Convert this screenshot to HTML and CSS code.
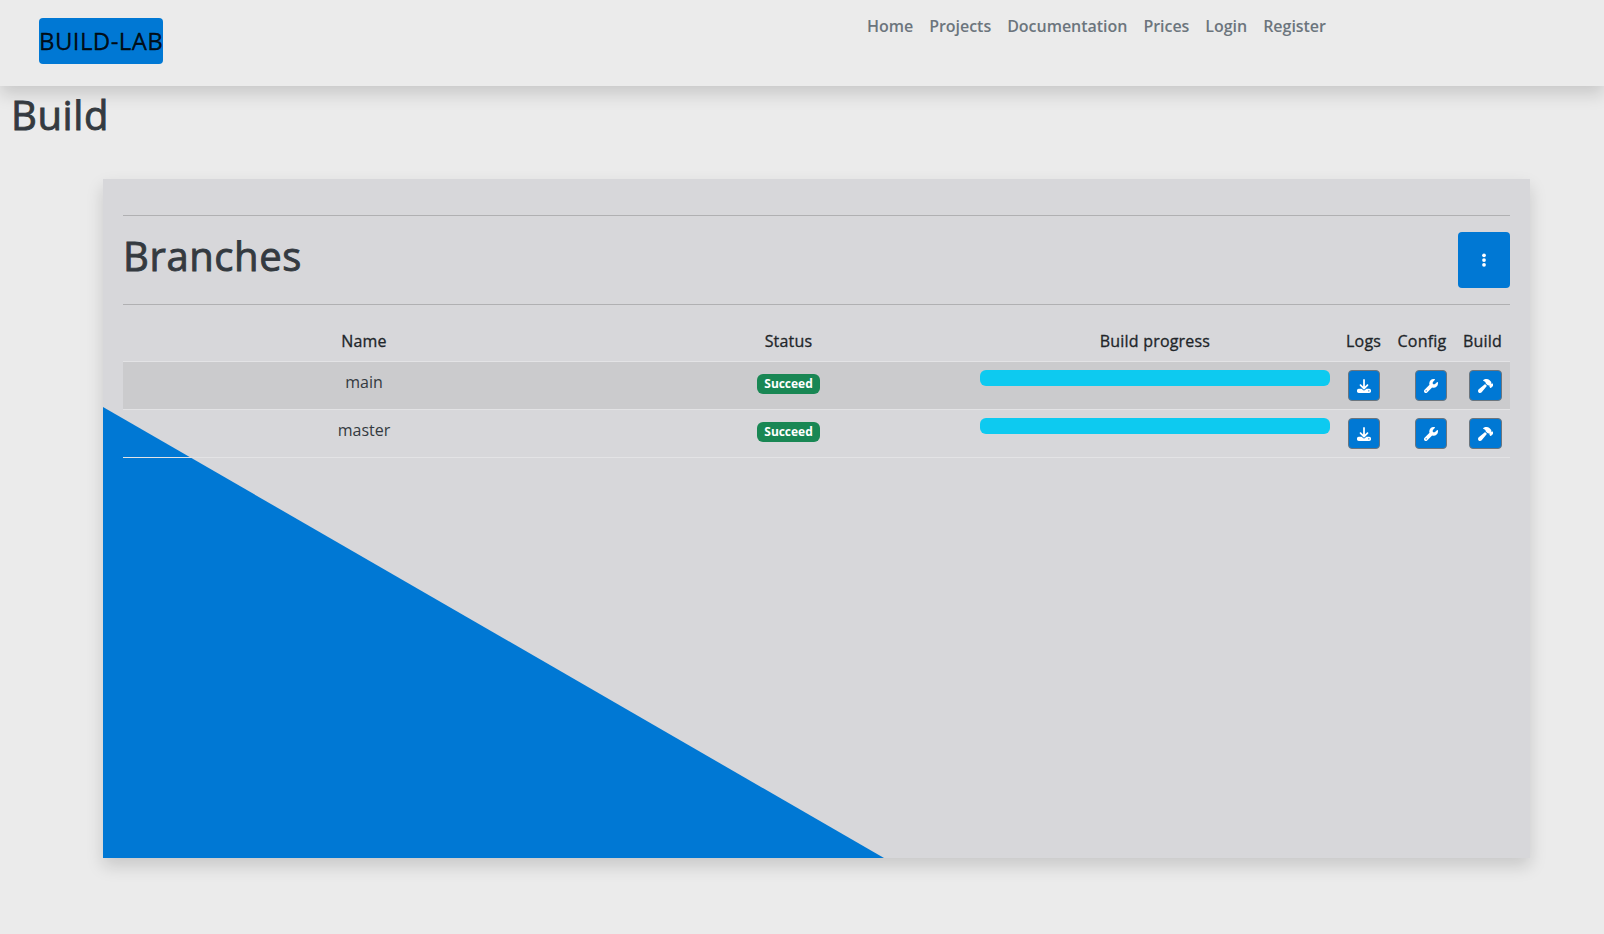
FILE: index.html
```html
<!DOCTYPE html>
<html lang="en">
<head>
  <meta charset="UTF-8">
  <title>Build</title>
  <link rel="stylesheet" href="styles.css">
</head>
<body>

  <header class="topbar">
    <a class="brand" href="#">BUILD-LAB</a>
    <nav class="nav">
      <a href="#">Home</a>
      <a href="#">Projects</a>
      <a href="#">Documentation</a>
      <a href="#">Prices</a>
      <a href="#">Login</a>
      <a href="#">Register</a>
    </nav>
  </header>

  <h1 class="page-title">Build</h1>

  <section class="card">
    <div class="triangle"></div>
    <hr>
    <div class="card-head">
      <h1>Branches</h1>
      <button class="menu-btn">
        <svg class="icon-menu" viewBox="0 0 128 512"><circle cx="64" cy="104" r="60"/><circle cx="64" cy="256" r="60"/><circle cx="64" cy="408" r="60"/></svg>
      </button>
    </div>
    <hr>
    <table class="branches">
      <colgroup>
        <col class="col-name"><col class="col-status"><col class="col-progress"><col class="col-logs"><col class="col-config"><col class="col-build">
      </colgroup>
      <thead>
        <tr>
          <th>Name</th>
          <th>Status</th>
          <th>Build progress</th>
          <th>Logs</th>
          <th>Config</th>
          <th>Build</th>
        </tr>
      </thead>
      <tbody>
        <tr class="odd">
          <td>main</td>
          <td><span class="badge">Succeed</span></td>
          <td><div class="progress"></div></td>
          <td><button class="tool"><svg class="icon" viewBox="0 0 512 512"><path d="M288 32c0-17.700-14.300-32-32-32s-32 14.300-32 32V274.700l-73.400-73.400c-12.500-12.500-32.800-12.500-45.300 0s-12.500 32.800 0 45.300l128 128c12.500 12.500 32.800 12.500 45.300 0l128-128c12.500-12.500 12.500-32.800 0-45.300s-32.800-12.500-45.300 0L288 274.700V32zM64 352c-35.300 0-64 28.700-64 64v32c0 35.300 28.700 64 64 64H448c35.300 0 64-28.700 64-64V416c0-35.300-28.700-64-64-64H346.500l-45.300 45.300c-25 25-65.500 25-90.500 0L165.500 352H64zm368 56a24 24 0 1 1 0 48 24 24 0 1 1 0-48z"/></svg></button></td>
          <td class="end"><button class="tool"><svg class="icon" viewBox="0 0 512 512"><path d="M352 320c88.400 0 160-71.600 160-160c0-15.300-2.200-30.100-6.200-44.200c-3.100-10.800-16.400-13.200-24.300-5.300l-76.800 76.800c-3 3-7.100 4.700-11.300 4.700H336c-8.800 0-16-7.200-16-16V118.600c0-4.200 1.700-8.300 4.700-11.300l76.800-76.800c7.900-7.900 5.400-21.200-5.300-24.300C382.100 2.200 367.300 0 352 0C263.600 0 192 71.600 192 160c0 19.100 3.400 37.500 9.500 54.500L19.900 396.100C7.200 408.800 0 426.100 0 444.100C0 481.600 30.400 512 67.900 512c18 0 35.300-7.200 48-19.900L297.500 310.500c17 6.200 35.400 9.500 54.500 9.500zM80 408a24 24 0 1 1 0 48 24 24 0 1 1 0-48z"/></svg></button></td>
          <td class="end"><button class="tool tool-wide"><svg class="icon" viewBox="0 0 576 512"><path d="M413.500 237.500c-28.200 4.800-58.200-3.600-80-25.400l-38.100-38.100C280.400 159 272 138.800 272 117.600V105.500L192.300 62c-5.300-2.900-8.600-8.600-8.300-14.700s3.900-11.500 9.500-14l47.200-21C259.100 4.200 279 0 299.200 0h18.100c36.700 0 72 14 98.700 39.100l44.600 42c24.200 22.800 33.200 55.700 26.600 86L503 183l8-8c9.400-9.400 24.600-9.400 33.900 0l24 24c9.400 9.400 9.400 24.600 0 33.900l-88 88c-9.400 9.400-24.600 9.400-33.900 0l-24-24c-9.400-9.400-9.400-24.600 0-33.900l8-8-17.500-17.500zM27.400 377.100L260.900 182.600c3.500 4.900 7.500 9.600 11.800 14l38.100 38.100c6 6 12.400 11.200 19.200 15.700L134.900 484.600c-14.500 17.400-36 27.400-58.600 27.400C34.100 512 0 477.800 0 435.700c0-22.600 10.100-44.100 27.400-58.600z"/></svg></button></td>
        </tr>
        <tr>
          <td>master</td>
          <td><span class="badge">Succeed</span></td>
          <td><div class="progress"></div></td>
          <td><button class="tool"><svg class="icon" viewBox="0 0 512 512"><path d="M288 32c0-17.700-14.300-32-32-32s-32 14.300-32 32V274.700l-73.400-73.400c-12.500-12.500-32.800-12.500-45.300 0s-12.500 32.800 0 45.300l128 128c12.500 12.500 32.800 12.500 45.300 0l128-128c12.500-12.500 12.500-32.800 0-45.300s-32.800-12.500-45.300 0L288 274.700V32zM64 352c-35.300 0-64 28.700-64 64v32c0 35.300 28.700 64 64 64H448c35.300 0 64-28.700 64-64V416c0-35.300-28.700-64-64-64H346.500l-45.300 45.300c-25 25-65.500 25-90.500 0L165.500 352H64zm368 56a24 24 0 1 1 0 48 24 24 0 1 1 0-48z"/></svg></button></td>
          <td class="end"><button class="tool"><svg class="icon" viewBox="0 0 512 512"><path d="M352 320c88.400 0 160-71.600 160-160c0-15.300-2.200-30.100-6.200-44.200c-3.100-10.800-16.400-13.200-24.300-5.300l-76.800 76.800c-3 3-7.100 4.700-11.300 4.700H336c-8.800 0-16-7.200-16-16V118.600c0-4.200 1.700-8.300 4.700-11.300l76.800-76.800c7.900-7.900 5.400-21.200-5.300-24.300C382.100 2.200 367.300 0 352 0C263.600 0 192 71.600 192 160c0 19.100 3.400 37.500 9.500 54.500L19.900 396.100C7.200 408.800 0 426.100 0 444.100C0 481.600 30.400 512 67.900 512c18 0 35.300-7.200 48-19.900L297.500 310.500c17 6.200 35.400 9.500 54.500 9.500zM80 408a24 24 0 1 1 0 48 24 24 0 1 1 0-48z"/></svg></button></td>
          <td class="end"><button class="tool tool-wide"><svg class="icon" viewBox="0 0 576 512"><path d="M413.500 237.500c-28.200 4.800-58.200-3.600-80-25.400l-38.100-38.100C280.400 159 272 138.800 272 117.600V105.500L192.300 62c-5.300-2.900-8.600-8.600-8.300-14.700s3.900-11.500 9.500-14l47.200-21C259.100 4.200 279 0 299.200 0h18.100c36.700 0 72 14 98.700 39.100l44.600 42c24.200 22.800 33.200 55.700 26.600 86L503 183l8-8c9.400-9.400 24.600-9.400 33.900 0l24 24c9.400 9.400 9.400 24.600 0 33.900l-88 88c-9.400 9.400-24.600 9.400-33.900 0l-24-24c-9.400-9.400-9.400-24.600 0-33.900l8-8-17.500-17.500zM27.400 377.100L260.900 182.600c3.500 4.900 7.500 9.600 11.800 14l38.100 38.100c6 6 12.400 11.200 19.200 15.700L134.900 484.600c-14.500 17.400-36 27.400-58.600 27.400C34.100 512 0 477.800 0 435.700c0-22.600 10.100-44.100 27.400-58.600z"/></svg></button></td>
        </tr>
      </tbody>
    </table>
  </section>

</body>
</html>
```

FILE: styles.css
```css
* {
  box-sizing: border-box;
}

body {
  margin: 0;
  min-height: 934px;
  background-color: #ebebeb;
  font-family: "Open Sans", sans-serif;
  font-size: 16px;
  line-height: 24px;
  color: #212529;
}

.topbar {
  display: flex;
  height: 86px;
  padding-left: 39px;
  background-color: #ebebeb;
  box-shadow: 0 8px 16px rgba(0, 0, 0, .15);
}

.brand {
  align-self: flex-start;
  margin-top: 18px;
  width: 124px;
  height: 46px;
  background-color: #0078d4;
  border-radius: 4px;
  color: rgba(0, 0, 0, .9);
  font-size: 24px;
  line-height: 46px;
  letter-spacing: .4px;
  -webkit-text-stroke: .3px;
  text-align: center;
  text-decoration: none;
  white-space: nowrap;
}

.nav {
  display: flex;
  align-self: flex-start;
  margin-top: 6px;
  margin-left: 696px;
}

.nav a {
  padding: 8px;
  color: #6c757d;
  font-weight: 600;
  letter-spacing: -.03px;
  text-decoration: none;
}

.page-title {
  margin: 5px 0 0 11px;
  height: 88px;
  color: #343a40;
  font-size: 40px;
  font-weight: 400;
  line-height: 48px;
  letter-spacing: .6px;
  -webkit-text-stroke: .9px;
}

.card {
  position: relative;
  width: 1427px;
  height: 679px;
  margin-left: 103px;
  padding: 20px;
  background-color: #d7d7da;
  box-shadow: 0 8px 16px rgba(0, 0, 0, .15);
}

.triangle {
  position: absolute;
  left: 0;
  bottom: 0;
  width: 781px;
  height: 451px;
  background-color: #0078d4;
  clip-path: polygon(0 0, 100% 100%, 0 100%);
}

hr {
  margin: 16px 0;
  border: none;
  border-top: 1px solid #b0b0b2;
}

.card-head {
  display: flex;
  justify-content: space-between;
}

.card-head h1 {
  margin: 0;
  color: #343a40;
  font-size: 40px;
  font-weight: 400;
  line-height: 48px;
  letter-spacing: .6px;
  -webkit-text-stroke: .9px;
}

.menu-btn {
  display: flex;
  align-items: center;
  justify-content: center;
  width: 52px;
  height: 56px;
  padding: 0;
  border: none;
  border-radius: 4px;
  background-color: #0078d4;
  color: #fff;
}

.branches {
  position: relative;
  width: 100%;
  border-collapse: collapse;
  table-layout: fixed;
}

.col-name { width: 482px; }
.col-status { width: 367px; }
.col-progress { width: 366px; }
.col-logs { width: 51px; }
.col-config { width: 66px; }
.col-build { width: 55px; }

.branches th {
  padding: 8px;
  font-weight: 400;
  letter-spacing: .2px;
  -webkit-text-stroke: .3px;
  text-align: center;
  white-space: nowrap;
  border-bottom: 1px solid #e3e3e5;
}

.branches td {
  height: 48px;
  padding: 8px;
  color: #343a40;
  text-align: center;
  vertical-align: top;
  border-bottom: 1px solid #e3e3e5;
}

.branches td.end {
  text-align: right;
}

.branches .odd td {
  background-color: #cbcbcd;
}

.badge {
  display: inline-block;
  padding: 4px 7px;
  border-radius: 6px;
  background-color: #198754;
  color: #fff;
  font-size: 12px;
  font-weight: 700;
  line-height: 12px;
  letter-spacing: -.03px;
}

.progress {
  height: 16px;
  border-radius: 6px;
  background-color: #0dcaf0;
}

.tool {
  display: inline-flex;
  align-items: center;
  justify-content: center;
  width: 32px;
  height: 31px;
  padding: 0;
  border: 1px solid #6c757d;
  border-radius: 4px;
  background-color: #0078d4;
  color: #fff;
  vertical-align: top;
}

.tool-wide {
  width: 33px;
}

.icon {
  height: 14px;
  fill: currentColor;
}

.icon-menu {
  height: 16px;
  fill: currentColor;
}
```
